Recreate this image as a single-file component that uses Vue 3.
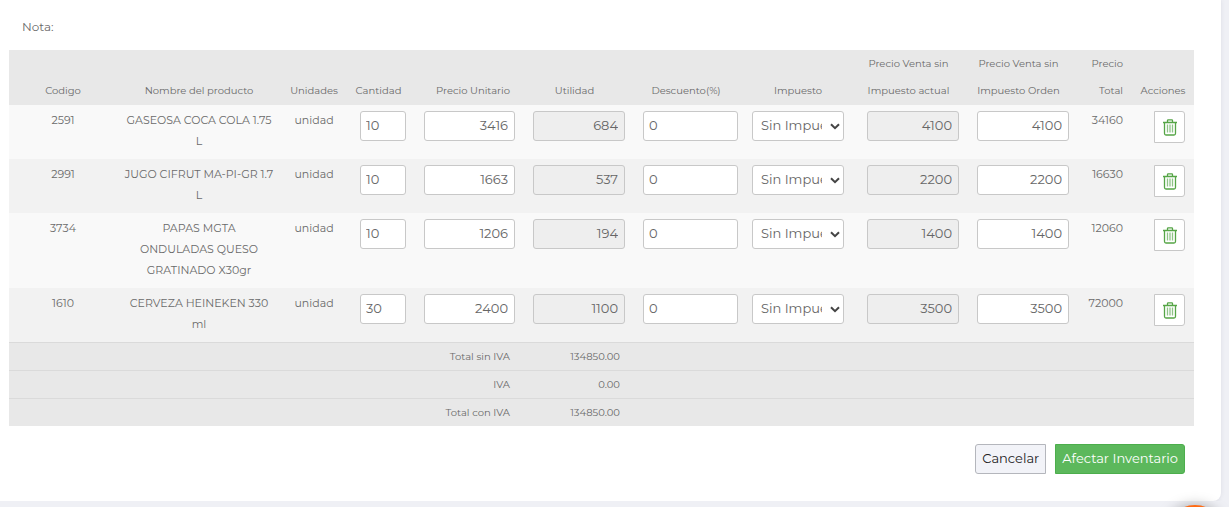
<script setup>
import { ref } from 'vue'

const headers = [
  'Codigo', 'Nombre del producto', 'Unidades', 'Cantidad', 'Precio Unitario', 'Utilidad',
  'Descuento(%)', 'Impuesto', 'Precio Venta sin Impuesto actual', 'Precio Venta sin Impuesto Orden',
  'Precio Total', 'Acciones',
]
const columns = ['code', 'name', 'unit', 'qty', 'price', 'profit', 'discount', 'tax', 'current', 'order', 'total', 'actions']

const items = ref([
  { code: '2591', name: 'GASEOSA COCA COLA 1.75\nL', unit: 'unidad', qty: '10', price: '3416', profit: '684', discount: '0', current: '4100', order: '4100', total: '34160' },
  { code: '2991', name: 'JUGO CIFRUT MA-PI-GR 1.7\nL', unit: 'unidad', qty: '10', price: '1663', profit: '537', discount: '0', current: '2200', order: '2200', total: '16630' },
  { code: '3734', name: 'PAPAS MGTA\nONDULADAS QUESO\nGRATINADO X30gr', unit: 'unidad', qty: '10', price: '1206', profit: '194', discount: '0', current: '1400', order: '1400', total: '12060' },
  { code: '1610', name: 'CERVEZA HEINEKEN 330\nml', unit: 'unidad', qty: '30', price: '2400', profit: '1100', discount: '0', current: '3500', order: '3500', total: '72000' },
])

const totals = [
  { label: 'Total sin IVA', value: '134850.00' },
  { label: 'IVA', value: '0.00' },
  { label: 'Total con IVA', value: '134850.00' },
]
</script>

<template>
  <main class="card">
    <p class="note">Nota:</p>
    <table class="grid">
      <colgroup>
        <col v-for="c in columns" :key="c" :class="'w-' + c">
      </colgroup>
      <thead>
        <tr>
          <th v-for="(h, i) in headers" :key="h" scope="col" :class="'h-' + columns[i]">{{ h }}</th>
        </tr>
      </thead>
      <tbody>
        <tr v-for="item in items" :key="item.code">
          <td class="center">{{ item.code }}</td>
          <td class="center name">{{ item.name }}</td>
          <td class="center">{{ item.unit }}</td>
          <td class="control qty"><input v-model="item.qty" type="text" aria-label="Cantidad"></td>
          <td class="control num"><input v-model="item.price" type="text" aria-label="Precio Unitario"></td>
          <td class="control num"><input v-model="item.profit" type="text" aria-label="Utilidad" readonly></td>
          <td class="control discount"><input v-model="item.discount" type="text" aria-label="Descuento"></td>
          <td class="control tax">
            <div class="select">
              <select aria-label="Impuesto"><option>Sin Impuesto</option></select>
              <svg viewBox="0 0 10 7" aria-hidden="true"><path d="M1 1.2 5 5.2 9 1.2" /></svg>
            </div>
          </td>
          <td class="control num"><input v-model="item.current" type="text" aria-label="Precio Venta sin Impuesto actual" readonly></td>
          <td class="control num"><input v-model="item.order" type="text" aria-label="Precio Venta sin Impuesto Orden"></td>
          <td class="right">{{ item.total }}</td>
          <td class="control action">
            <button type="button" class="trash" aria-label="Eliminar">
              <svg viewBox="0 0 14 17" aria-hidden="true">
                <path class="line" d="M0 3.5h14M4.5 3V1.5q0-.7.7-.7h3.6q.7 0 .7.7V3M1.5 4v10.5q0 1.5 1.5 1.5h8q1.5 0 1.5-1.5V4" />
                <path class="bars" d="M4.5 5.5v8M7 5.5v8M9.5 5.5v8" />
              </svg>
            </button>
          </td>
        </tr>
      </tbody>
      <tfoot>
        <tr v-for="t in totals" :key="t.label">
          <td colspan="4"></td>
          <th scope="row">{{ t.label }}</th>
          <td>{{ t.value }}</td>
          <td colspan="6"></td>
        </tr>
      </tfoot>
    </table>
    <div class="buttons">
      <button type="button" class="cancel">Cancelar</button>
      <button type="button" class="submit">Afectar Inventario</button>
    </div>
  </main>
  <button type="button" class="help" aria-label="Ayuda"></button>
</template>

<style>
body {
  background: #eff0f5;
}
</style>

<style scoped>
* {
  box-sizing: border-box;
}
.card {
  margin-right: 8px;
  padding: 17px 27px 27px 9px;
  background: #fff;
  border-radius: 0 0 8px 0;
  box-shadow: 0 0 4px rgba(60, 60, 90, 0.1);
  color: #6a6a6a;
  font-family: Montserrat, Inter, sans-serif;
}
.note {
  margin: 0 0 13px 13px;
  font-size: 12px;
  line-height: 20px;
}
.grid {
  width: 100%;
  table-layout: fixed;
  border-collapse: separate;
  border-spacing: 0;
  font-size: 11px;
  line-height: 21px;
}
.w-code { width: 108px; }
.w-name { width: 164px; }
.w-unit { width: 66px; }
.w-qty { width: 68px; }
.w-price { width: 109px; }
.w-profit { width: 110px; }
.w-discount { width: 109px; }
.w-tax { width: 115px; }
.w-current { width: 110px; }
.w-order { width: 110px; }
.w-total { width: 54px; }
.w-actions { width: 62px; }
thead th {
  padding: 0 9px 1px;
  background: #e8e8e8;
  font-size: 10px;
  font-weight: 400;
  line-height: 27px;
  vertical-align: bottom;
}
thead .h-unit, thead .h-qty, thead .h-actions {
  padding-left: 0;
  padding-right: 0;
}
thead .h-qty {
  padding-right: 5px;
}
thead .h-price, thead .h-total {
  padding-left: 0;
  text-align: right;
}
thead .h-price, thead .h-discount, thead .h-tax {
  padding-right: 14px;
}
thead .h-profit, thead .h-current, thead .h-order {
  padding-right: 18px;
}
tbody td {
  padding: 5px 9px 7px;
  background: #f9f9f9;
  vertical-align: top;
}
tbody tr:nth-child(even) td {
  background: #f2f2f2;
}
tbody .center {
  text-align: center;
  padding-left: 0;
  padding-right: 0;
}
tbody .name {
  white-space: pre-line;
}
tbody .right {
  padding-left: 0;
  text-align: right;
}
tbody .control {
  padding-top: 6px;
  padding-bottom: 0;
}
tbody .qty {
  padding-left: 13px;
}
tbody .discount {
  padding-right: 5px;
}
tbody .tax {
  padding-right: 14px;
}
input, select {
  display: block;
  width: 100%;
  height: 30px;
  margin: 0;
  padding: 0 6px 2px;
  border: 1px solid #c8c8c8;
  border-radius: 3px;
  background: #fff;
  color: #666;
  font-family: inherit;
  font-size: 13px;
}
.qty input, .discount input {
  padding-left: 5px;
}
.num input {
  text-align: right;
}
input[readonly] {
  background: #eee;
}
.select {
  position: relative;
}
select {
  appearance: none;
  padding: 0 21px 2px 8px;
}
.select svg {
  position: absolute;
  right: 4px;
  top: 12px;
  width: 10px;
  height: 7px;
  fill: none;
  stroke: #444;
  stroke-width: 2;
  pointer-events: none;
}
.trash {
  display: flex;
  align-items: center;
  justify-content: center;
  width: 31px;
  height: 32px;
  margin-left: auto;
  padding: 0;
  border: 1px solid #c8c8c8;
  border-radius: 0 3px 3px 0;
  background: #fff;
}
.trash svg {
  width: 14px;
  height: 17px;
  fill: none;
}
.line {
  stroke: #55a546;
  stroke-width: 1.3;
}
.bars {
  stroke: #8fc487;
  stroke-width: 1.3;
}
tbody .action {
  padding-left: 0;
}
tfoot td, tfoot th {
  height: 28px;
  padding: 0 14px 0 0;
  border-top: 1px solid #dadada;
  background: #e8e8e8;
  font-size: 10px;
  font-weight: 400;
  text-align: right;
}
.buttons {
  display: flex;
  justify-content: flex-end;
  gap: 9px;
  margin: 18px 9px 0 0;
}
.buttons button {
  height: 30px;
  padding: 0 6px 2px;
  font-family: inherit;
  font-size: 13px;
}
.cancel {
  border: 1px solid #b4b6bc;
  border-radius: 3px 0 0 3px;
  background: #f2f3f8;
  color: #222;
}
.submit {
  border: 1px solid #4cae4c;
  border-radius: 0 3px 3px 0;
  background: #5cb85c;
  color: #fff;
}
.help {
  position: fixed;
  right: 4px;
  bottom: -58px;
  width: 60px;
  height: 60px;
  padding: 0;
  border: 0;
  border-radius: 50%;
  background: #ff6a13;
  box-shadow: 0 1px 14px rgba(0, 0, 0, 0.35);
}
</style>
